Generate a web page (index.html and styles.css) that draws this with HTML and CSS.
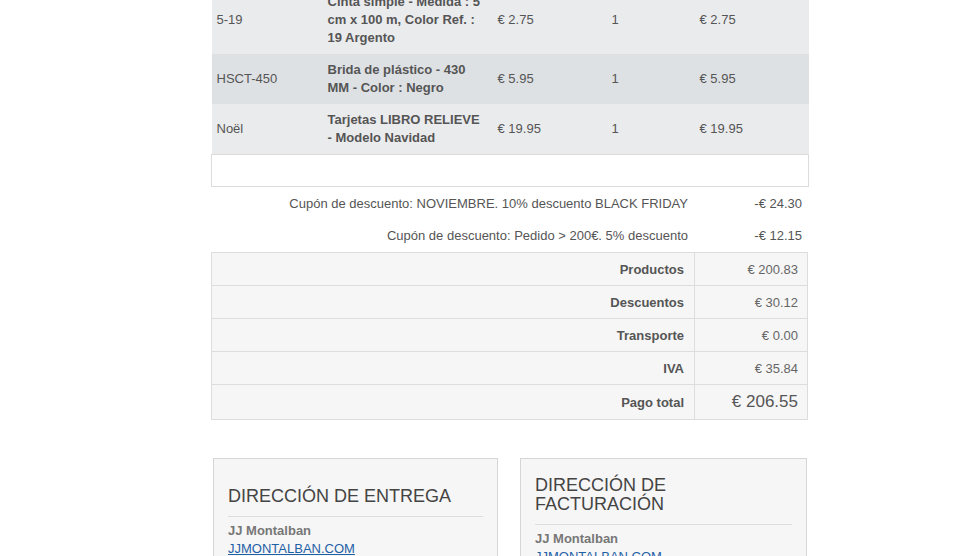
FILE: index.html
```html
<!DOCTYPE html>
<html lang="es">
<head>
<meta charset="utf-8">
<title>Pedido</title>
<link rel="stylesheet" href="styles.css">
</head>
<body>
<div class="page">
  <table class="items">
    <colgroup>
      <col class="c-ref"><col class="c-name"><col class="c-price"><col class="c-qty"><col class="c-total">
    </colgroup>
    <tbody>
      <tr class="odd">
        <td>5-19</td>
        <td class="name">Cinta simple - Medida : 5 cm x 100 m, Color Ref. : 19 Argento</td>
        <td>€ 2.75</td>
        <td>1</td>
        <td>€ 2.75</td>
      </tr>
      <tr class="even">
        <td>HSCT-450</td>
        <td class="name">Brida de plástico - 430 MM - Color : Negro</td>
        <td>€ 5.95</td>
        <td>1</td>
        <td>€ 5.95</td>
      </tr>
      <tr class="odd">
        <td>Noël</td>
        <td class="name">Tarjetas LIBRO RELIEVE - Modelo Navidad</td>
        <td>€ 19.95</td>
        <td>1</td>
        <td>€ 19.95</td>
      </tr>
      <tr class="blank">
        <td colspan="5"></td>
      </tr>
    </tbody>
  </table>

  <div class="coupons">
    <div class="coupon">
      <span class="coupon-label">Cupón de descuento: NOVIEMBRE. 10% descuento BLACK FRIDAY</span>
      <span class="coupon-value">-€ 24.30</span>
    </div>
    <div class="coupon">
      <span class="coupon-label">Cupón de descuento: Pedido &gt; 200€. 5% descuento</span>
      <span class="coupon-value">-€ 12.15</span>
    </div>
  </div>

  <table class="totals">
    <tbody>
      <tr><th>Productos</th><td>€ 200.83</td></tr>
      <tr><th>Descuentos</th><td>€ 30.12</td></tr>
      <tr><th>Transporte</th><td>€ 0.00</td></tr>
      <tr><th>IVA</th><td>€ 35.84</td></tr>
      <tr class="grand"><th>Pago total</th><td>€ 206.55</td></tr>
    </tbody>
  </table>

  <div class="addresses">
    <div class="address-box">
      <h3 class="address-title"><span>DIRECCIÓN DE ENTREGA</span></h3>
      <div class="address-rule"></div>
      <div class="address-name">JJ Montalban</div>
      <a class="address-link" href="#">JJMONTALBAN.COM</a>
    </div>
    <div class="address-box wide">
      <h3 class="address-title"><span>DIRECCIÓN DE FACTURACIÓN</span></h3>
      <div class="address-rule"></div>
      <div class="address-name">JJ Montalban</div>
      <a class="address-link" href="#">JJMONTALBAN.COM</a>
    </div>
  </div>
</div>
</body>
</html>
```

FILE: styles.css
```css
html, body {
  margin: 0;
  padding: 0;
  background: #ffffff;
}

body {
  font-family: "Liberation Sans", Arial, sans-serif;
  font-size: 13px;
  color: #555555;
}

.page {
  width: 597px;
  margin-left: 211px;
  margin-top: -14px;
}

/* items */
.items {
  width: 597px;
  border-collapse: collapse;
  table-layout: fixed;
}

.c-ref { width: 111px; }
.c-name { width: 170px; }
.c-price { width: 114px; }
.c-qty { width: 88px; }
.c-total { width: 114px; }

.items td {
  padding: 7px 5px;
  line-height: 18px;
  vertical-align: middle;
  color: #555555;
}

.items td.name {
  font-weight: bold;
  padding-right: 9px;
}

.items tr.odd td { background: #eaebed; }
.items tr.even td { background: #dee1e4; }

.items tr.blank td {
  height: 31px;
  padding: 0;
  background: #ffffff;
  border: 1px solid #dcdcdc;
}

/* coupons */
.coupons {
  display: flex;
  flex-direction: column;
}

.coupon {
  display: flex;
  height: 32px;
  align-items: center;
}

.coupon-label {
  flex: 1;
  text-align: right;
  padding-right: 6px;
}

.coupon-value {
  width: 108px;
  text-align: right;
  padding-right: 6px;
}

/* totals */
.totals {
  width: 597px;
  border-collapse: collapse;
  margin-top: 1px;
  background: #f6f6f6;
}

.totals th,
.totals td {
  border: 1px solid #dddddd;
  height: 32px;
  padding: 0 10px 0 0;
  text-align: right;
  vertical-align: middle;
}

.totals th {
  font-weight: bold;
  color: #555555;
}

.totals td {
  width: 103px;
  color: #666666;
  padding-right: 9px;
}

.totals tr.grand th,
.totals tr.grand td {
  height: 34px;
}

.totals tr.grand td {
  font-size: 17px;
  color: #555555;
}

/* addresses */
.addresses {
  display: grid;
  grid-template-columns: 285px 287px;
  column-gap: 22px;
  padding-left: 2px;
  margin-top: 38px;
}

.address-box {
  background: #f6f6f6;
  border: 1px solid #d6d6d6;
  padding: 17px 14px 20px 14px;
  min-height: 120px;
}

.address-title {
  margin: 0;
  min-height: 30px;
  display: flex;
  align-items: flex-end;
  font-size: 18px;
  line-height: 19px;
  font-weight: normal;
  color: #444444;
}

.address-rule {
  height: 1px;
  background: #dddddd;
  margin: 10px 0 5px 0;
}

.address-name {
  font-weight: bold;
  color: #777777;
  line-height: 18px;
}

.address-link {
  display: inline-block;
  color: #1f5fa6;
  line-height: 18px;
  text-decoration: underline;
}
```
